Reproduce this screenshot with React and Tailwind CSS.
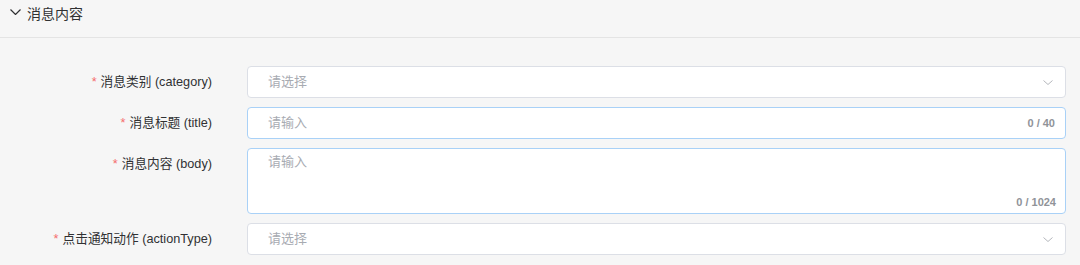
const font = { fontFamily: '"Liberation Sans", "Noto Sans CJK SC", sans-serif' };

function Chevron({ w, h, color, stroke }) {
  return (
    <svg width={w} height={h} viewBox={`0 0 ${w} ${h}`} fill="none">
      <path d={`M0.5 0.5 L${w / 2} ${h - 0.5} L${w - 0.5} 0.5`} stroke={color} strokeWidth={stroke} />
    </svg>
  );
}

function Label({ children }) {
  return (
    <div className="w-[212px] shrink-0 text-right text-[12.7px] leading-[32px] text-[#303133]">
      <span className="mr-[4px] text-[#f56c6c]">*</span>
      {children}
    </div>
  );
}

function Select() {
  return (
    <div className="flex h-8 w-[819px] items-center justify-between rounded-[4px] border border-[#dcdfe6] bg-white pl-5 pr-[12px]">
      <span className="text-[13px] text-[#a8abb2]">请选择</span>
      <Chevron w={10} h={5} color="#b4b7bc" stroke={1} />
    </div>
  );
}

export default function App() {
  return (
    <div className="h-[265px] w-[1080px] overflow-hidden bg-[#f6f6f6]" style={font}>
      <div className="flex h-[38px] items-start gap-[6px] border-b border-[#e4e4e4] pl-[10px] pt-[5px]">
        <div className="pt-[4px]">
          <Chevron w={11} h={6} color="#303133" stroke={1.2} />
        </div>
        <span className="text-[14px] leading-[18px] text-[#303133]">消息内容</span>
      </div>

      <div className="flex flex-col gap-[9px] pt-[28px]">
        <div className="flex gap-[35px]">
          <Label>消息类别 (category)</Label>
          <Select />
        </div>

        <div className="flex gap-[35px]">
          <Label>消息标题 (title)</Label>
          <div className="flex h-8 w-[819px] items-center justify-between rounded-[4px] border border-[#a9d1f7] bg-white pl-5 pr-[10px]">
            <span className="text-[13px] text-[#a8abb2]">请输入</span>
            <span className="text-[11px] font-semibold text-[#909399]">0 / 40</span>
          </div>
        </div>

        <div className="flex gap-[35px]">
          <Label>消息内容 (body)</Label>
          <div className="relative flex h-[66px] w-[819px] rounded-[4px] border border-[#a9d1f7] bg-white pl-5 pt-[4px]">
            <span className="text-[13px] leading-[18px] text-[#a8abb2]">请输入</span>
            <span className="absolute bottom-[3px] right-[9px] text-[11px] font-semibold text-[#909399]">0 / 1024</span>
          </div>
        </div>

        <div className="flex gap-[35px]">
          <Label>点击通知动作 (actionType)</Label>
          <Select />
        </div>
      </div>
    </div>
  );
}
